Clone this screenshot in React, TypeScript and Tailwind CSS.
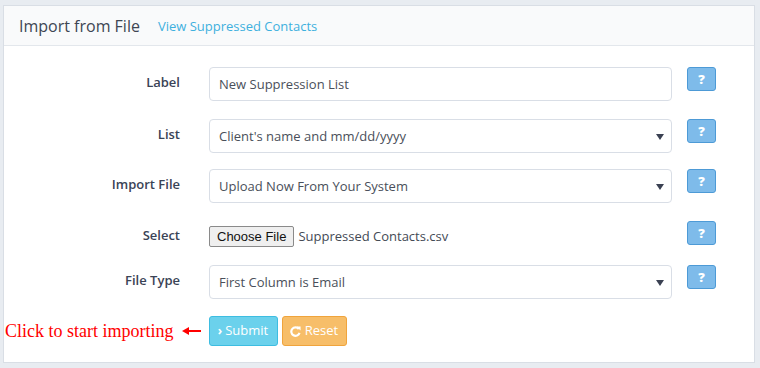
import React from "react";

const HelpButton = () => (
  <button
    type="button"
    className="flex h-[24px] w-[29px] items-center justify-center rounded-[3px] border border-[#4d9ad6] bg-[#7ebbea] text-[13px] font-extrabold leading-none text-white"
  >
    ?
  </button>
);

const Caret = () => (
  <svg width="8" height="6" viewBox="0 0 8 6" className="absolute right-[7px] top-[14px]">
    <path d="M0 0 L8 0 L4 6 Z" fill="#3b4152" />
  </svg>
);

function FieldRow({
  label,
  children,
  className,
}: {
  label: string;
  children: React.ReactNode;
  className?: string;
}) {
  return (
    <div className={`flex items-start ${className ?? ""}`}>
      <div className="w-[176px] text-right text-[13px] font-semibold leading-[30px] text-[#3a4356]">
        {label}
      </div>
      <div className="ml-[29px] w-[463px]">{children}</div>
      <div className="ml-[15px]">
        <HelpButton />
      </div>
    </div>
  );
}

const Box = ({ text, select }: { text: string; select?: boolean }) => (
  <div className="relative h-[34px] rounded-[4px] border border-[#d9dee6] bg-white pl-[9px] text-[13px] leading-[32px] text-[#4a4f5a]">
    {text}
    {select && <Caret />}
  </div>
);

export default function App() {
  return (
    <div
      className="h-[368px] w-[760px] bg-[#e8ecf1] pl-[3px] pt-[5px]"
      style={{ fontFamily: '"Open Sans", sans-serif' }}
    >
      <div className="h-[358px] w-[752px] border border-[#d9dee5] bg-white">
        <div className="flex h-[40px] items-center border-b border-[#e3e7ec] bg-[#f9fafb] pl-[15px]">
          <span className="text-[16px] text-[#3e4653]">Import from File</span>
          <a href="#" className="ml-[18px] mt-[2px] text-[13px] text-[#3eb0de]">
            View Suppressed Contacts
          </a>
        </div>

        <div className="pt-[21px]">
          <FieldRow label="Label">
            <Box text="New Suppression List" />
          </FieldRow>
          <FieldRow label="List" className="mt-[18px]">
            <Box text="Client's name and mm/dd/yyyy" select />
          </FieldRow>
          <FieldRow label="Import File" className="mt-[16px]">
            <Box text="Upload Now From Your System" select />
          </FieldRow>
          <div className="mt-[17px] flex h-[30px] items-start">
            <div className="w-[176px] text-right text-[13px] font-semibold leading-[30px] text-[#3a4356]">
              Select
            </div>
            <div className="ml-[29px] flex w-[463px] items-center pt-[6px]">
              <span
                className="flex h-[21px] items-center rounded-[2px] border border-[#8a8a8a] bg-[#efefef] px-[7px] text-[13px] text-[#111]"
                style={{ fontFamily: '"Liberation Sans", Arial, sans-serif' }}
              >
                Choose File
              </span>
              <span className="ml-[4px] text-[13px] text-[#444a55]">Suppressed Contacts.csv</span>
            </div>
            <div className="ml-[15px] pt-[1px]">
              <HelpButton />
            </div>
          </div>
          <FieldRow label="File Type" className="mt-[15px]">
            <Box text="First Column is Email" select />
          </FieldRow>

          <div className="mt-[17px] flex items-center">
            <span
              className="ml-[1px] text-[18px] leading-none text-[#f00]"
              style={{ fontFamily: '"Liberation Serif", "Times New Roman", serif' }}
            >
              Click to start importing
            </span>
            <svg width="20" height="10" viewBox="0 0 20 10" className="ml-[8px]">
              <path d="M0 5 L7 1 L7 4 L19 4 L19 6 L7 6 L7 9 Z" fill="#f00" />
            </svg>
            <button
              type="button"
              className="ml-[7px] flex h-[30px] w-[69px] items-center justify-center rounded-[3px] border border-[#3dbde1] bg-[#6bd1ec] text-[13px] text-white"
            >
              <span className="mr-[3px] text-[12px] font-bold">›</span>Submit
            </button>
            <button
              type="button"
              className="ml-[4px] flex h-[30px] w-[65px] items-center justify-center rounded-[3px] border border-[#f0a43c] bg-[#f7be69] text-[13px] text-white"
            >
              <svg width="11" height="11" viewBox="0 0 12 12" className="mr-[4px]">
                <path
                  d="M9.6 3.2 A4.6 4.6 0 1 0 10.4 7.6"
                  fill="none"
                  stroke="#fff"
                  strokeWidth="2.4"
                />
                <path d="M7 0.5 L11.5 0.5 L11.5 5 Z" fill="#fff" />
              </svg>
              Reset
            </button>
          </div>
        </div>
      </div>
    </div>
  );
}
